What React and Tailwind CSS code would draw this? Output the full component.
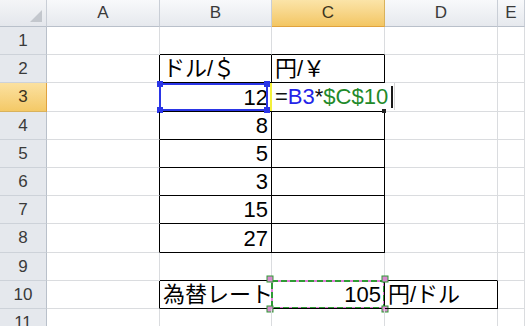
import React from "react";

const COLS = ["A", "B", "C", "D", "E"];
const ROWS = [1, 2, 3, 4, 5, 6, 7, 8, 9, 10, 11];

// cell values, keyed by address
const values = {
  B2: { text: "ドル/＄", align: "left" },
  C2: { text: "円/￥", align: "left" },
  B3: { text: "12" },
  B4: { text: "8" },
  B5: { text: "5" },
  B6: { text: "3" },
  B7: { text: "15" },
  B8: { text: "27" },
  B10: { text: "為替レート", align: "left" },
  C10: { text: "105" },
  D10: { text: "円/ドル", align: "left" },
};

// cells with thin black borders on all sides
const boxed = (r, c) => {
  if (r >= 2 && r <= 8 && (c === "B" || c === "C")) return true;
  if (r === 10 && (c === "B" || c === "C" || c === "D")) return true;
  return false;
};

const nextCol = (c) => COLS[COLS.indexOf(c) + 1];

function ColHead({ name }) {
  const active = name === "C";
  return (
    <div
      className={
        "flex items-center justify-center border-r border-b text-[17px] " +
        (active
          ? "bg-gradient-to-b from-[#fbe4a8] to-[#f3c662] border-r-[#d9b25c] border-b-[#e0a23e] text-[#3b3320]"
          : "bg-gradient-to-b from-[#f8f9fb] to-[#e6e9ee] border-r-[#c9ced6] border-b-[#b9c0ca] text-[#3a3a3a]")
      }
    >
      {name}
    </div>
  );
}

function RowHead({ n }) {
  const active = n === 3;
  return (
    <div
      className={
        "flex items-center justify-center border-r border-b text-[17px] " +
        (active
          ? "bg-gradient-to-b from-[#fbe1a0] to-[#f4c966] border-r-[#e0a23e] border-b-[#d9b25c] text-[#3b3320]"
          : "bg-[#e5e8ed] border-r-[#b9c0ca] border-b-[#cdd2d9] text-[#3a3a3a]")
      }
    >
      {n}
    </div>
  );
}

// four square grips drawn at the corners of a box
function Grips({ fill, stroke }) {
  return (
    <svg className="absolute -inset-[4px] w-[calc(100%+8px)] h-[calc(100%+8px)] overflow-visible">
      {[
        ["0", "0"],
        ["calc(100% - 6px)", "0"],
        ["0", "calc(100% - 6px)"],
        ["calc(100% - 6px)", "calc(100% - 6px)"],
      ].map(([x, y], i) => (
        <rect key={i} x={x} y={y} width="6" height="6" fill={fill} stroke={stroke} strokeWidth={stroke ? 1 : 0} />
      ))}
    </svg>
  );
}

function RangeBox() {
  // blue reference box round B3
  return (
    <div className="absolute -left-[1px] top-0 right-[3px] bottom-0 border-2 border-[#2a35e6] pointer-events-none">
      <Grips fill="#2a35e6" />
    </div>
  );
}

function EditBox() {
  // cell being edited: formula text spills past the column edge
  return (
    <>
      <div className="absolute -left-[2px] top-0 bottom-0 w-[2px] bg-[#f3f03a]" />
      <div className="absolute left-0 top-0 bottom-[1px] flex items-end pl-[3px] pr-[1px] bg-white whitespace-nowrap z-10 border-r border-[#d6d6d6]">
        <span className="leading-[26px]">
          <span className="text-[#111]">=</span>
          <span className="text-[#2424e8]">B3</span>
          <span className="text-[#111]">*</span>
          <span className="text-[#1f8a2a]">$C$10</span>
        </span>
        <span className="w-[2px] h-[22px] mb-[2px] ml-[3px] bg-[#1a1a1a]" />
      </div>
      <span className="absolute -right-[2px] -bottom-[2px] w-[4px] h-[4px] bg-[#222] z-10" />
    </>
  );
}

function CopyMarquee() {
  // marching-ants border round C10
  return (
    <div className="absolute -left-[1px] -top-[1px] right-0 bottom-0 pointer-events-none">
      <svg className="absolute inset-0 w-full h-full">
        <rect x="1" y="1" width="112" height="27" fill="none" stroke="#e07ad8" strokeWidth="2" />
        <rect x="1" y="1" width="112" height="27" fill="none" stroke="#2f9a35" strokeWidth="2" strokeDasharray="6 3" />
      </svg>
      <Grips fill="#d98ad0" stroke="#2f9a35" />
    </div>
  );
}

function Cell({ r, c }) {
  const addr = c + r;
  const v = values[addr];
  const rightBlack = boxed(r, c) || boxed(r, nextCol(c));
  const bottomBlack = boxed(r, c) || boxed(r + 1, c);
  return (
    <div
      className={
        "relative flex items-end border-r border-b px-[3px] text-[22px] leading-[26px] text-black whitespace-nowrap " +
        (rightBlack ? "border-r-black " : "border-r-[#dadcdf] ") +
        (bottomBlack ? "border-b-black " : "border-b-[#dadcdf] ") +
        (v && v.align === "left" ? "justify-start" : "justify-end")
      }
    >
      {v && addr !== "C3" && <span>{v.text}</span>}
      {addr === "B3" && <RangeBox />}
      {addr === "C3" && <EditBox />}
      {addr === "C10" && <CopyMarquee />}
    </div>
  );
}

export default function App() {
  return (
    <div
      className="w-[525px] h-[326px] overflow-hidden bg-white"
      style={{ fontFamily: '"Liberation Sans", "Noto Sans CJK JP", sans-serif' }}
    >
      <div className="grid grid-cols-[47px_113px_112px_113px_113px_1fr] grid-rows-[27px_28px_28px_29px_28px_28px_28px_28px_29px_28px_28px_28px]">
        {/* select-all button */}
        <div className="flex items-end justify-end p-[4px] border-r border-b border-r-[#c9ced6] border-b-[#b9c0ca] bg-gradient-to-b from-[#f4f5f7] to-[#e4e7ec]">
          <svg width="12" height="12" viewBox="0 0 12 12">
            <polygon points="12,0 12,12 0,12" fill="#c3c7cd" />
          </svg>
        </div>
        {COLS.map((c) => (
          <ColHead key={c} name={c} />
        ))}
        {ROWS.map((r) => (
          <React.Fragment key={r}>
            <RowHead n={r} />
            {COLS.map((c) => (
              <Cell key={c + r} r={r} c={c} />
            ))}
          </React.Fragment>
        ))}
      </div>
    </div>
  );
}
